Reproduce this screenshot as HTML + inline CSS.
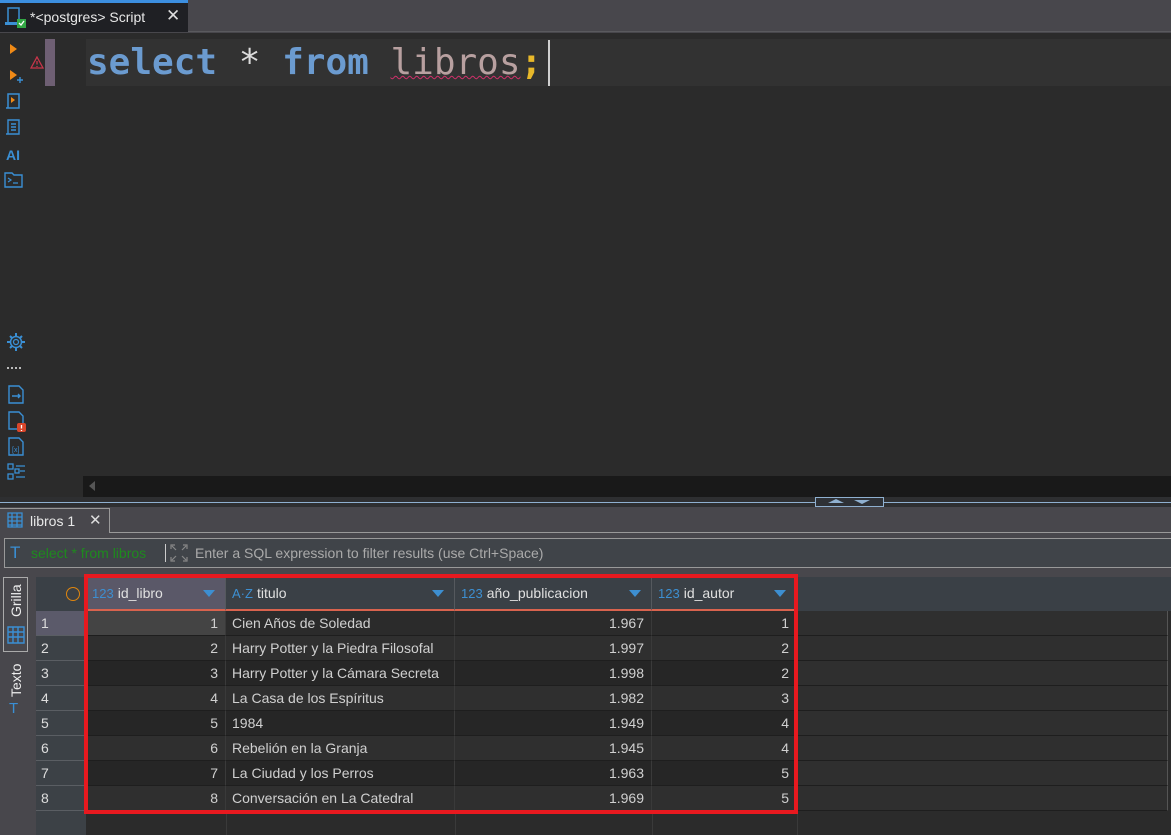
<!DOCTYPE html>
<html><head><meta charset="utf-8"><style>
*{margin:0;padding:0;box-sizing:border-box}
body{width:1171px;height:835px;overflow:hidden;background:#48474c;font-family:"Liberation Sans",sans-serif;position:relative;font-size:14px}
.a{position:absolute}
.cell{position:absolute;height:25px;line-height:25px;font-size:14px;color:#d0d0d0;white-space:nowrap;overflow:hidden;border-right:1px solid #3a3a3a;border-bottom:1px solid #1e1e1e}
.r{text-align:right;padding-right:7px}
.l{padding-left:6px}
.hd{position:absolute;top:577px;height:34px;line-height:32px;color:#e0e0e0;font-size:14px;border-right:1px solid #55595e;padding-left:6px;background:#3a4046;border-bottom:2px solid #d9634e}
.hd b{color:#3d8fd1;font-weight:normal;font-size:13px;margin-right:4px}
.tri{position:absolute;right:10px;top:13px;width:0;height:0;border-left:6px solid transparent;border-right:6px solid transparent;border-top:7px solid #3d8fd1}
.rn{position:absolute;left:36px;width:50px;height:25px;line-height:25px;color:#ddd;padding-left:5px;border-bottom:1px solid #5a5e63;background:#3c4146;font-size:14px}
</style></head><body>
<!-- top tab bar -->
<div class="a" style="left:0;top:0;width:1171px;height:32px;background:#48474c;border-bottom:1px solid #5a5a5e"></div>
<div class="a" style="left:0;top:0;width:188px;height:32px;background:#1f2024;border-top:3px solid #3c8fe0"></div>
<svg class="a" style="left:5px;top:7px" width="22" height="22"><rect x="3" y="1" width="11" height="15" fill="none" stroke="#3a8fd4" stroke-width="1.5"/><rect x="0" y="15" width="14" height="3" fill="#3a8fd4"/><rect x="12" y="12" width="9" height="9" fill="#33a845"/><path d="M14 16l2 2 3-4" stroke="#fff" fill="none" stroke-width="1.3"/></svg>
<div class="a" style="left:30px;top:9px;color:#e8e8e8;font-size:14px">*&lt;postgres&gt; Script</div>
<div class="a" style="left:166px;top:6px;color:#ddd;font-size:17px">✕</div>
<!-- editor -->
<div class="a" style="left:0;top:33px;width:1171px;height:464px;background:#2b2b2b"></div>
<div class="a" style="left:86px;top:39px;width:1085px;height:47px;background:#323232"></div>
<div class="a" style="left:45px;top:39px;width:10px;height:47px;background:#6e5f73"></div>
<svg class="a" style="left:30px;top:56px" width="14" height="13"><path d="M7 1L13 12H1Z" fill="none" stroke="#c9354a" stroke-width="1.3"/><path d="M7 5v3.5M7 10v1" stroke="#c9354a" stroke-width="1.3"/></svg>
<div class="a" style="left:87px;top:41px;font-family:'DejaVu Sans Mono','Liberation Mono',monospace;font-size:36px;line-height:44px;font-weight:bold;white-space:pre;color:#6b9bd0"><span>select</span> <span style="color:#dcdcdc;font-weight:normal">*</span> from <span style="color:#b8a0a0;font-weight:normal;text-decoration:underline wavy #d0306a;text-decoration-thickness:1px">libros</span><span style="color:#e8b82a">;</span></div>
<div class="a" style="left:548px;top:40px;width:2px;height:46px;background:#d0d0d0"></div>
<!-- left toolbar -->
<svg class="a" style="left:0;top:36px" width="30" height="160">
<path d="M10 8l7 5-7 5z" fill="#f08a16"/>
<path d="M10 34l7 5-7 5z" fill="#f08a16"/><path d="M17 44h6M20 41v6" stroke="#3a8fd4" stroke-width="1.4"/>
<path d="M8 58h11v14H8zM6 72h11" fill="none" stroke="#3a8fd4" stroke-width="1.5"/><path d="M11 61l4 3-4 3z" fill="#f08a16"/>
<path d="M8 84h11v14H8zM6 98h11M11 88h5M11 91h5M11 94h5" fill="none" stroke="#3a8fd4" stroke-width="1.4"/>
<text x="6" y="124" font-family="Liberation Sans" font-weight="bold" font-size="14" fill="#3a8fd4">AI</text>
<path d="M5 137h7l2 2h8v12H5z" fill="none" stroke="#3a8fd4" stroke-width="1.4"/><path d="M8 142l3 2-3 2M13 147h5" stroke="#3a8fd4" fill="none" stroke-width="1.2"/>
</svg>
<svg class="a" style="left:0;top:330px" width="30" height="160">
<circle cx="16" cy="12" r="5.5" fill="none" stroke="#3a8fd4" stroke-width="1.5"/><circle cx="16" cy="12" r="2.5" fill="none" stroke="#3a8fd4" stroke-width="1.3"/>
<path d="M16 3v3M16 18v3M7 12h3M22 12h3M10 6l2 2M20 16l2 2M22 6l-2 2M10 18l2-2" stroke="#3a8fd4" stroke-width="2"/>
<path d="M7 38h2M11 38h2M15 38h2M19 38h2" stroke="#bbb" stroke-width="2"/>
<path d="M9 56h10l4 4v13H9z" fill="none" stroke="#3a8fd4" stroke-width="1.4"/><path d="M12 66h8M18 64l2 2-2 2" stroke="#3a8fd4" stroke-width="1.4" fill="none"/>
<path d="M9 82h10l4 4v13H9z" fill="none" stroke="#3a8fd4" stroke-width="1.4"/><rect x="17" y="93" width="9" height="9" rx="2" fill="#d9462b"/><path d="M21.5 95v3.5M21.5 100v1" stroke="#fff" stroke-width="1.3"/>
<path d="M9 108h10l4 4v13H9z" fill="none" stroke="#3a8fd4" stroke-width="1.4"/><text x="12" y="122" font-size="7" fill="#3a8fd4">[x]</text>
<rect x="8" y="134" width="5" height="5" fill="none" stroke="#3a8fd4" stroke-width="1.3"/><rect x="15" y="139" width="4" height="4" fill="none" stroke="#3a8fd4" stroke-width="1.3"/><rect x="8" y="144" width="5" height="5" fill="none" stroke="#3a8fd4" stroke-width="1.3"/><path d="M16 136h9M20 141h5M16 147h9" stroke="#3a8fd4" stroke-width="1.3"/>
</svg>
<!-- h scrollbar -->
<div class="a" style="left:83px;top:476px;width:1088px;height:21px;background:#191919"></div>
<div class="a" style="left:89px;top:481px;width:0;height:0;border-top:5px solid transparent;border-bottom:5px solid transparent;border-right:6px solid #555"></div>
<!-- split -->
<div class="a" style="left:0;top:497px;width:1171px;height:10px;background:#2e2f31"></div>
<div class="a" style="left:0;top:502px;width:1171px;height:1px;background:#8fb0d0"></div>
<div class="a" style="left:815px;top:497px;width:69px;height:10px;background:#2e3136;border:1px solid #8fb0d0"></div>
<div class="a" style="left:828px;top:499px;border-left:8px solid transparent;border-right:8px solid transparent;border-bottom:4px solid #8fb0d0"></div>
<div class="a" style="left:854px;top:500px;border-left:8px solid transparent;border-right:8px solid transparent;border-top:4px solid #8fb0d0"></div>
<!-- results tab -->
<div class="a" style="left:0;top:507px;width:1171px;height:68px;background:#48474c"></div>
<div class="a" style="left:0;top:532px;width:1171px;height:1px;background:#999"></div>
<div class="a" style="left:0;top:508px;width:110px;height:25px;background:#48474c;border:1px solid #999;border-bottom:none;border-left:none"></div>
<svg class="a" style="left:7px;top:512px" width="16" height="16"><path d="M1 1h14v14H1zM1 5h14M1 9h14M1 13h14M5 1v14M10 1v14" fill="none" stroke="#3a8fd4" stroke-width="1.3"/></svg>
<div class="a" style="left:30px;top:513px;color:#e8e8e8;font-size:14px">libros 1</div>
<div class="a" style="left:89px;top:511px;color:#ddd;font-size:15px">✕</div>
<!-- filter -->
<div class="a" style="left:4px;top:538px;width:1167px;height:30px;background:#404449;border:1px solid #999;border-right:none"></div>
<div class="a" style="left:10px;top:543px;color:#3a8fd4;font-size:17px">T</div>
<div class="a" style="left:31px;top:545px;color:#1e8a1e;font-size:14px">select * from libros</div>
<div class="a" style="left:165px;top:544px;width:1px;height:18px;background:#ccc"></div>
<svg class="a" style="left:170px;top:544px" width="18" height="18"><path d="M1 5V1h4M13 1h4v4M17 13v4h-4M5 17H1v-4M2 2l4 4M16 2l-4 4M16 16l-4-4M2 16l4-4" stroke="#888" fill="none" stroke-width="1.2"/></svg>
<div class="a" style="left:195px;top:545px;color:#aaa;font-size:14px">Enter a SQL expression to filter results (use Ctrl+Space)</div>
<!-- grid area -->
<div class="a" style="left:36px;top:577px;width:1135px;height:258px;background:#2b2b2b"></div>
<div class="a" style="left:36px;top:577px;width:1135px;height:34px;background:#3a4046"></div>
<div class="a" style="left:3px;top:577px;width:25px;height:75px;border:1px solid #aaa;background:#48474c"></div>
<div class="a" style="left:8px;top:617px;transform:rotate(-90deg);transform-origin:0 0;color:#eee;font-size:14px">Grilla</div>
<svg class="a" style="left:7px;top:626px" width="18" height="18"><path d="M1 1h16v16H1zM1 6h16M1 11h16M6 1v16M11 1v16" fill="none" stroke="#3a8fd4" stroke-width="1.4"/></svg>
<div class="a" style="left:8px;top:697px;transform:rotate(-90deg);transform-origin:0 0;color:#eee;font-size:14px">Texto</div>
<div class="a" style="left:9px;top:700px;color:#3a8fd4;font-size:15px">T</div>
<div class="a" style="left:66px;top:587px;width:14px;height:14px;border:1.5px solid #e0860e;border-radius:50%"></div>
<!-- row numbers -->
<div class="rn" style="top:611px;background:#5b5a6a">1</div>
<div class="rn" style="top:636px">2</div><div class="rn" style="top:661px">3</div><div class="rn" style="top:686px">4</div><div class="rn" style="top:711px">5</div><div class="rn" style="top:736px">6</div><div class="rn" style="top:761px">7</div><div class="rn" style="top:786px">8</div>
<div class="a" style="left:36px;top:811px;width:50px;height:24px;background:#3c4146"></div>
<!-- headers -->
<div class="hd" style="left:86px;width:140px;background:#5a5868"><b>123</b>id_libro<i class="tri"></i></div>
<div class="hd" style="left:226px;width:229px"><b>A·Z</b>titulo<i class="tri"></i></div>
<div class="hd" style="left:455px;width:197px"><b>123</b>año_publicacion<i class="tri"></i></div>
<div class="hd" style="left:652px;width:145px"><b>123</b>id_autor<i class="tri"></i></div>
<!-- rows -->
<div id="rows"></div>
<div class="a" style="left:226px;top:811px;width:1px;height:24px;background:#3a3a3a"></div>
<div class="a" style="left:455px;top:811px;width:1px;height:24px;background:#3a3a3a"></div>
<div class="a" style="left:652px;top:811px;width:1px;height:24px;background:#3a3a3a"></div>
<div class="a" style="left:797px;top:811px;width:1px;height:24px;background:#3a3a3a"></div>
<script>
var d=[[1,"Cien Años de Soledad","1.967",1],[2,"Harry Potter y la Piedra Filosofal","1.997",2],[3,"Harry Potter y la Cámara Secreta","1.998",2],[4,"La Casa de los Espíritus","1.982",3],[5,"1984","1.949",4],[6,"Rebelión en la Granja","1.945",4],[7,"La Ciudad y los Perros","1.963",5],[8,"Conversación en La Catedral","1.969",5]];
var h="";d.forEach(function(r,i){var t=611+i*25,bg=i%2?"#2f2f2f":"#262626";if(i==0)bg="#2b2b2b";
h+='<div class="cell r" style="left:86px;top:'+t+'px;width:140px;background:'+(i==0?"#444":bg)+'">'+r[0]+'</div>';
h+='<div class="cell l" style="left:226px;top:'+t+'px;width:229px;background:'+bg+'">'+r[1]+'</div>';
h+='<div class="cell r" style="left:455px;top:'+t+'px;width:197px;background:'+bg+'">'+r[2]+'</div>';
h+='<div class="cell r" style="left:652px;top:'+t+'px;width:145px;background:'+bg+'">'+r[3]+'</div>';
h+='<div class="cell" style="left:797px;top:'+t+'px;width:371px;background:#2f2f2f;border-right:1px solid #555"></div>';});
document.getElementById("rows").innerHTML=h;
</script>
<div class="a" style="left:84px;top:574px;width:714px;height:240px;border:4px solid #e8191f"></div>
</body></html>
